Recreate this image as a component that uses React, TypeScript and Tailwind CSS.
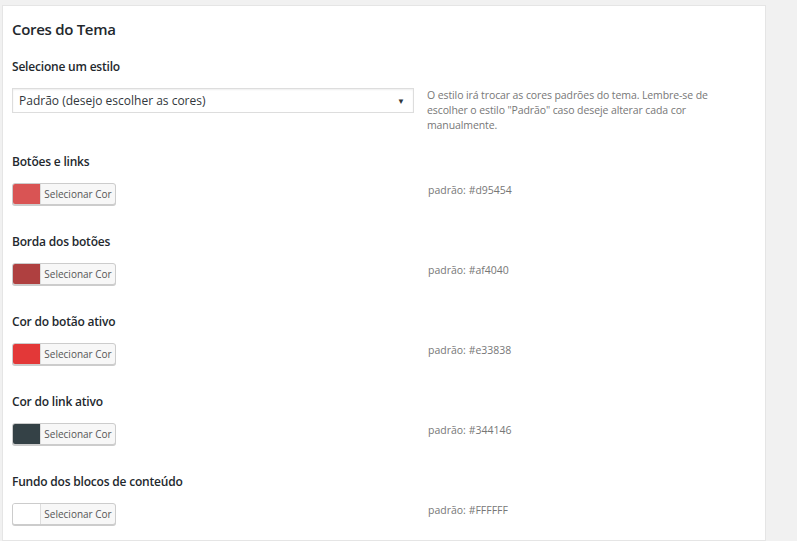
const colorFields = [
  { label: "Botões e links", color: "#d95454", hex: "#d95454" },
  { label: "Borda dos botões", color: "#af4040", hex: "#af4040" },
  { label: "Cor do botão ativo", color: "#e33838", hex: "#e33838" },
  { label: "Cor do link ativo", color: "#344146", hex: "#344146" },
  { label: "Fundo dos blocos de conteúdo", color: "#ffffff", hex: "#FFFFFF" },
];

function ColorButton({ color }: { color: string }) {
  return (
    <button className="flex h-[22px] w-[104px] items-stretch overflow-hidden rounded-[3px] border border-[#cccccc] bg-[#f7f7f7] shadow-[0_1px_0_#cccccc]">
      <span
        className="w-[28px] shrink-0 border-r border-[#dddddd]"
        style={{ backgroundColor: color }}
      />
      <span className="flex flex-1 items-center justify-center whitespace-nowrap text-[10px] text-[#555555]">
        Selecionar Cor
      </span>
    </button>
  );
}

export default function App() {
  return (
    <div
      className="min-h-screen bg-[#f1f1f1] pl-[2px] pt-[5px]"
      style={{ fontFamily: '"Open Sans", "Noto Sans", sans-serif' }}
    >
      <div className="min-h-[536px] w-[764px] border border-[#e5e5e5] bg-white px-[9px] pt-[13px] text-[#23282d]">
        {/* Title */}
        <h2 className="text-[15px] font-semibold leading-[20px] tracking-[-0.3px]">Cores do Tema</h2>

        {/* Style select */}
        <div className="mt-[18px]">
          <div className="text-[12px] font-semibold leading-[20px] tracking-[-0.2px]">Selecione um estilo</div>
          <div className="mt-[11px] grid grid-cols-[402px_300px] gap-x-[13px]">
            <div className="flex h-[25px] items-center justify-between border border-[#dddddd] pl-[6px] pr-[8px] text-[12px] text-[#32373c] shadow-[inset_0_1px_2px_rgba(0,0,0,0.07)]">
              <span>Padrão (desejo escolher as cores)</span>
              <span className="text-[8px] text-[#32373c]">▼</span>
            </div>
            <p className="text-[10.5px] leading-[15px] tracking-[-0.1px] text-[#777777]">
              O estilo irá trocar as cores padrões do tema. Lembre-se de escolher o estilo "Padrão" caso deseje alterar cada cor manualmente.
            </p>
          </div>
        </div>

        {/* Colour pickers */}
        <div className="mt-[19px] flex flex-col gap-[27px]">
          {colorFields.map((f) => (
            <div key={f.label}>
              <div className="text-[12px] font-semibold leading-[20px] tracking-[-0.2px]">{f.label}</div>
              <div className="mt-[11px] grid grid-cols-[402px_1fr] gap-x-[14px]">
                <div>
                  <ColorButton color={f.color} />
                </div>
                <div className="text-[10.5px] leading-[15px] text-[#777777]">
                  padrão: {f.hex}
                </div>
              </div>
            </div>
          ))}
        </div>
      </div>
    </div>
  );
}
